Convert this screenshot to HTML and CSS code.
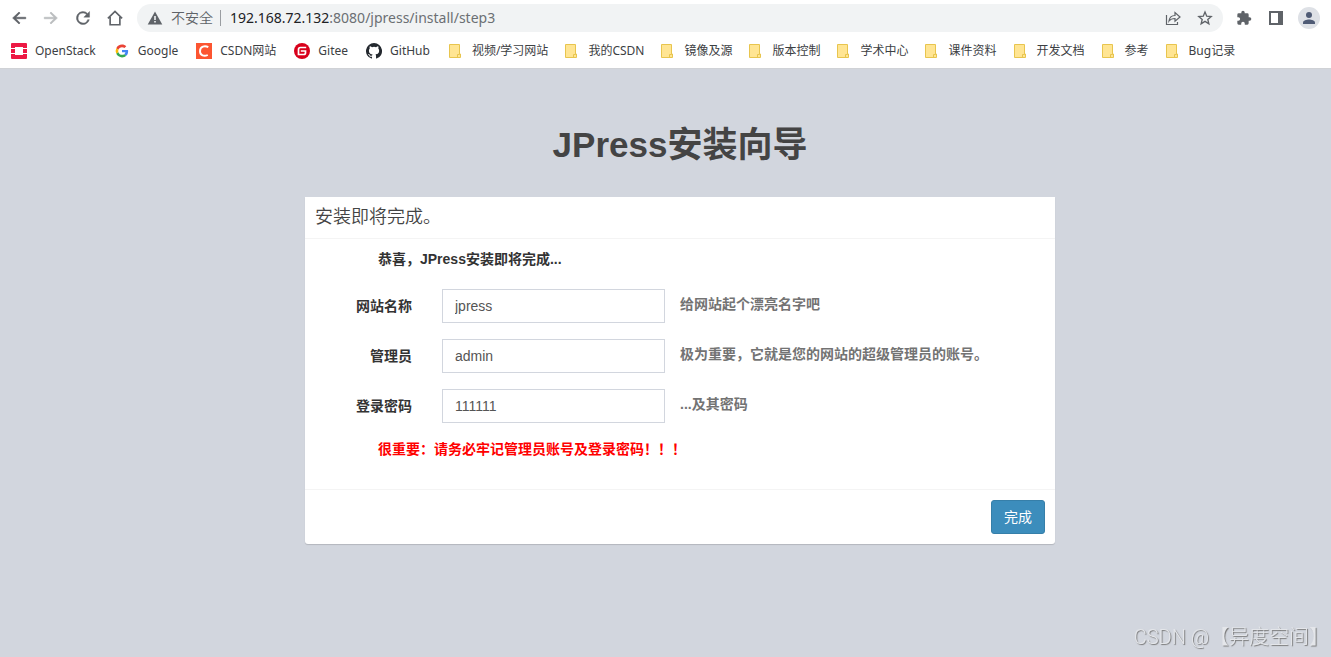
FILE: index.html
```html
<!DOCTYPE html>
<html lang="zh-CN">
<head>
<meta charset="utf-8">
<title>JPress安装向导</title>
<link rel="stylesheet" href="styles.css">
</head>
<body>
<svg class="sprite" aria-hidden="true">
  <symbol id="folder" viewBox="0 0 16 16"><path d="M1.500 1.500h10v9.500h1v3.500h-11z" fill="#ffe593" stroke="#e8c54e"/><path d="M9.500 14.500v-3h2v-1.500" fill="none" stroke="#e8c54e"/></symbol>
</svg>
<header class="browser">
  <div class="toolbar">
    <nav class="nav-buttons">
      <button class="icon-btn" aria-label="后退"><svg viewBox="0 0 24 24"><path fill="#5f6368" d="M21 11H7.830l5.590-5.590L12 4l-8.500 8 8.500 8 1.410-1.410L7.830 13H21z" stroke="#5f6368" stroke-width=".8"/></svg></button>
      <button class="icon-btn" aria-label="前进"><svg viewBox="0 0 24 24"><path fill="#bbbdbf" d="M3 11h13.170l-5.590-5.590L12 4l8.500 8-8.500 8-1.410-1.410L16.170 13H3z" stroke="#bbbdbf" stroke-width=".8"/></svg></button>
      <button class="icon-btn" aria-label="刷新"><svg viewBox="1 1 22 22"><path fill="#5f6368" stroke="#5f6368" stroke-width=".5" d="M17.650 6.350A8 8 0 1 0 19.730 14h-2.080A6 6 0 1 1 12 6c1.660 0 3.140.69 4.220 1.780L13 11h7V4z"/></svg></button>
      <button class="icon-btn" aria-label="主页"><svg viewBox="0 0 24 24"><path fill="none" stroke="#5f6368" stroke-width="2.200" d="M2.500 12.500 12 3.200l9.500 9.300M5.500 10.500V21h13V10.500"/></svg></button>
    </nav>
    <div class="omnibox">
      <svg class="warn" viewBox="0 0 16 16"><path fill="#5f6368" d="M8 1.500 15.300 14.500H.7z"/><path fill="#f1f3f4" d="M7.200 6h1.600v4H7.200zM7.200 11h1.600v1.600H7.200z"/></svg>
      <span class="insecure">不安全</span>
      <span class="url"><span class="host">192.168.72.132</span>:8080/jpress/install/step3</span>
      <button class="icon-btn small" aria-label="分享"><svg viewBox="0 0 16 16"><path fill="none" stroke="#5f6368" stroke-width="1.200" d="M1.500 5v9.500h11V12M4 11c.5-4 3-5.500 6-5.500V2.500L15 7l-5 4.200V8.500c-3 0-4.500.5-6 2.500z"/></svg></button>
      <button class="icon-btn small" aria-label="收藏"><svg viewBox="0 0 24 24"><path fill="none" stroke="#5f6368" stroke-width="2" d="m12 3 2.600 6.200 6.700.5-5.100 4.400 1.600 6.500-5.800-3.500-5.800 3.500 1.600-6.500-5.100-4.400 6.700-.5z"/></svg></button>
    </div>
    <div class="actions">
      <button class="icon-btn small" aria-label="扩展程序"><svg viewBox="0 0 24 24"><path fill="#5f6368" d="M20.500 11H19V7a2 2 0 0 0-2-2h-4V3.500a2.500 2.500 0 0 0-5 0V5H4a2 2 0 0 0-2 2v3.800h1.500a2.700 2.700 0 0 1 0 5.400H2V20a2 2 0 0 0 2 2h3.800v-1.500a2.700 2.700 0 0 1 5.400 0V22H17a2 2 0 0 0 2-2v-4h1.500a2.500 2.500 0 0 0 0-5z"/></svg></button>
      <button class="icon-btn small" aria-label="侧边栏"><svg viewBox="0 0 16 16"><path fill="#5f6368" d="M2 1h14v14H2zM4 3v10h7V3z" fill-rule="evenodd"/></svg></button>
      <button class="icon-btn avatar" aria-label="用户"><svg viewBox="0 0 22 22"><circle cx="11" cy="11" r="11" fill="#dee1e6"/><circle cx="11" cy="8" r="3" fill="#4f5b75"/><path fill="#4f5b75" d="M5 17v-1.500c0-2 3.500-3 6-3s6 1 6 3V17z"/></svg></button>
    </div>
  </div>
  <nav class="bookmarks">
    <a class="site" href="#"><svg viewBox="0 0 16 16"><path fill="#ed1944" d="M1 0h14q1 0 1 1v4h-4V4H4v1H0V1q0-1 1-1zM0 6h4v4H0zM12 6h4v4h-4zM0 11h4v1h8v-1h4v4q0 1-1 1H1q-1 0-1-1z"/></svg>OpenStack</a>
    <a class="site" href="#"><svg viewBox="-6 -6 60 60"><path fill="#ea4335" d="M24 9.500c3.540 0 6.710 1.220 9.210 3.600l6.850-6.850C35.900 2.380 30.470 0 24 0 14.620 0 6.510 5.380 2.560 13.220l7.980 6.190C12.430 13.720 17.740 9.500 24 9.500z"/><path fill="#4285f4" d="M46.980 24.550c0-1.570-.15-3.090-.38-4.550H24v9.020h12.940c-.58 2.960-2.260 5.480-4.780 7.180l7.730 6c4.510-4.180 7.090-10.360 7.090-17.650z"/><path fill="#fbbc05" d="M10.530 28.590a14.500 14.500 0 0 1 0-9.180l-7.980-6.190a24 24 0 0 0 0 21.560z"/><path fill="#34a853" d="M24 48c6.480 0 11.930-2.130 15.890-5.810l-7.730-6c-2.150 1.450-4.920 2.300-8.160 2.300-6.260 0-11.570-4.220-13.470-9.910l-7.980 6.190C6.510 42.620 14.620 48 24 48z"/></svg>Google</a>
    <a class="site" href="#"><svg viewBox="0 0 16 16"><path fill="#fc5531" d="M0 0h16v16H0z"/><path fill="none" stroke="#fff" stroke-width="1.900" d="M12.300 4.200C9 2.400 4 3.200 4 8.300c0 4.500 4.200 5.300 7.800 3.700"/></svg>CSDN网站</a>
    <a class="site" href="#"><svg viewBox="0 0 16 16"><circle cx="8" cy="8" r="8" fill="#d8001b"/><path fill="none" stroke="#fff" stroke-width="1.700" d="M12.200 4.500H6.500q-2 0-2 2v5h5.200q1.800 0 1.800-1.800V8H6.800"/></svg>Gitee</a>
    <a class="site" href="#"><svg viewBox="0 0 16 16"><path fill="#24292f" d="M8 0a8 8 0 0 0-2.530 15.590c.4.070.55-.17.55-.38v-1.490c-2.010.37-2.530-.49-2.690-.94-.09-.23-.48-.94-.82-1.130-.28-.15-.68-.52-.01-.53.63-.01 1.080.58 1.230.82.720 1.210 1.870.87 2.330.66.070-.52.280-.87.510-1.070-1.780-.2-3.640-.89-3.640-3.950 0-.87.310-1.590.82-2.150-.08-.2-.36-1.020.08-2.120 0 0 .67-.21 2.200.82a7.400 7.400 0 0 1 4 0c1.530-1.040 2.200-.82 2.200-.82.440 1.100.16 1.920.08 2.120.51.560.82 1.270.82 2.150 0 3.070-1.870 3.750-3.650 3.950.29.250.54.730.54 1.480v2.200c0 .21.150.46.550.38A8 8 0 0 0 8 0z"/></svg>GitHub</a>
    <a href="#"><svg><use href="#folder"/></svg>视频/学习网站</a>
    <a href="#"><svg><use href="#folder"/></svg>我的CSDN</a>
    <a href="#"><svg><use href="#folder"/></svg>镜像及源</a>
    <a href="#"><svg><use href="#folder"/></svg>版本控制</a>
    <a href="#"><svg><use href="#folder"/></svg>学术中心</a>
    <a href="#"><svg><use href="#folder"/></svg>课件资料</a>
    <a href="#"><svg><use href="#folder"/></svg>开发文档</a>
    <a href="#"><svg><use href="#folder"/></svg>参考</a>
    <a href="#"><svg><use href="#folder"/></svg>Bug记录</a>
  </nav>
</header>
<main class="page">
  <h1 class="title">JPress安装向导</h1>
  <form class="card">
    <h2 class="card-header">安装即将完成。</h2>
    <div class="card-body">
      <p class="note">恭喜，JPress安装即将完成...</p>
      <div class="row"><label for="site">网站名称</label><input id="site" type="text" value="jpress"><span class="help">给网站起个漂亮名字吧</span></div>
      <div class="row"><label for="user">管理员</label><input id="user" type="text" value="admin"><span class="help">极为重要，它就是您的网站的超级管理员的账号。</span></div>
      <div class="row"><label for="pwd">登录密码</label><input id="pwd" type="text" value="111111"><span class="help">...及其密码</span></div>
      <p class="note warning">很重要：请务必牢记管理员账号及登录密码！！！</p>
    </div>
    <div class="card-footer"><button class="submit" type="button">完成</button></div>
  </form>
</main>
<div class="watermark">CSDN @【异度空间】</div>
</body>
</html>
```
FILE: styles.css
```css
* { box-sizing: border-box; }
body {
  margin: 0;
  min-height: 100vh;
  background: #d2d6de;
  color: #333;
  font: 14px/20px "Liberation Sans", "Noto Sans CJK SC", sans-serif;
}
.sprite { position: absolute; width: 0; height: 0; }
.browser {
  background: #fff;
  border-bottom: 1px solid #d0d2d6;
  font-family: "Noto Sans", "Noto Sans CJK SC", sans-serif;
}
.toolbar {
  display: flex;
  align-items: center;
  height: 36px;
  padding: 0 11px 0 10px;
}
.nav-buttons { display: flex; gap: 14px; }
.icon-btn {
  display: block;
  width: 18px;
  height: 18px;
  padding: 0;
  border: 0;
  background: none;
}
.icon-btn svg { display: block; width: 100%; height: 100%; }
.icon-btn.small { width: 16px; height: 16px; }
.icon-btn.avatar { width: 22px; height: 22px; }
.omnibox {
  flex: 1;
  display: flex;
  align-items: center;
  height: 28px;
  margin-left: 13px;
  padding: 0 10px;
  border-radius: 14px;
  background: #f1f3f4;
}
.warn { width: 16px; height: 16px; }
.insecure {
  margin-left: 8px;
  padding-right: 7px;
  border-right: 1px solid #9a9da1;
  color: #5f6368;
  font-weight: 350;
  line-height: 16px;
}
.url { flex: 1; margin-left: 9px; color: #6b6f73; }
.host { color: #202124; }
.omnibox .icon-btn { margin-left: 16px; }
.actions { display: flex; align-items: center; gap: 15px; margin-left: 13px; }
.bookmarks {
  display: flex;
  gap: 16px;
  height: 32px;
  padding: 0 11px 3px;
  overflow: hidden;
}
.bookmarks a {
  display: flex;
  align-items: center;
  gap: 8px;
  flex: none;
  color: #3c4043;
  font-size: 12px;
  text-decoration: none;
}
.bookmarks .site { margin-right: 2px; }
.bookmarks svg { width: 16px; height: 16px; }
.page {
  width: 779px;
  max-width: 100%;
  margin: 0 auto;
  padding: 51px 0 0 29px;
}
.title {
  margin: 0 0 27px;
  color: #444;
  font-size: 35px;
  line-height: 50px;
  text-align: center;
}
.card {
  background: #fff;
  border-radius: 0 0 3px 3px;
  box-shadow: 0 1px 1px rgba(0, 0, 0, .15);
}
.card-header {
  margin: 0;
  padding: 10px;
  border-bottom: 1px solid #f4f4f4;
  color: #444;
  font-size: 18px;
  font-weight: 350;
  line-height: 21px;
}
.card-body { padding: 10px 10px 30px; }
.note { margin: 0 0 20px 63px; font-weight: 700; }
.row {
  display: grid;
  grid-template-columns: 97px 223px 1fr;
  column-gap: 30px;
  margin-bottom: 16px;
}
.row label {
  padding-top: 7px;
  font-weight: 700;
  text-align: right;
}
.row input {
  width: 223px;
  height: 34px;
  padding: 6px 12px;
  border: 1px solid #d2d6de;
  border-radius: 0;
  background: #fff;
  color: #555;
  font: inherit;
}
.help { margin-left: -15px; padding-top: 5px; color: #737373; font-weight: 700; }
.note.warning { margin-bottom: 0; color: #f00; }
.card-footer {
  display: flex;
  justify-content: flex-end;
  padding: 10px;
  border-top: 1px solid #f4f4f4;
}
.submit {
  padding: 6px 12px;
  border: 1px solid #367fa9;
  border-radius: 3px;
  background: #3c8dbc;
  color: #fff;
  font: inherit;
}
.watermark {
  position: fixed;
  right: 2px;
  bottom: 6px;
  color: #e4e6ea;
  font: 300 20px/28px Roboto, "Noto Sans CJK SC", sans-serif;
  text-shadow: 1px 1px 1px #777;
}
```
